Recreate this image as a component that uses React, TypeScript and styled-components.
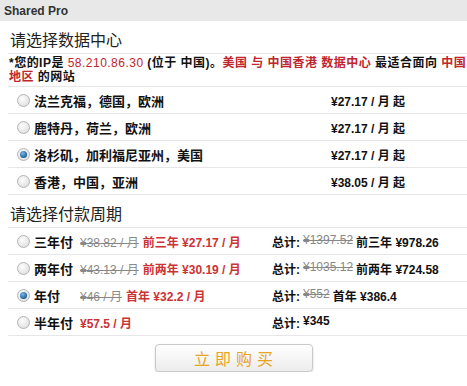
import React, { useState } from "react";
import styled, { createGlobalStyle } from "styled-components";

/** ===========================================================================
 * Shared Pro order form
 * ----------------------------------------------------------------------------
 * Datacenter picker plus billing period picker, with a buy button.
 * ============================================================================
 */

type Datacenter = { id: string; name: string; price: string };
type Period = {
  id: string;
  label: string;
  oldMonthly?: string;
  promo: string;
  oldTotal?: string;
  total: string;
};

const DATACENTERS: Datacenter[] = [
  { id: "fra", name: "法兰克福，德国，欧洲", price: "¥27.17 / 月 起" },
  { id: "rtm", name: "鹿特丹，荷兰，欧洲", price: "¥27.17 / 月 起" },
  { id: "lax", name: "洛杉矶，加利福尼亚州，美国", price: "¥27.17 / 月 起" },
  { id: "hkg", name: "香港，中国，亚洲", price: "¥38.05 / 月 起" },
];

const PERIODS: Period[] = [
  {
    id: "3y",
    label: "三年付",
    oldMonthly: "¥38.82 / 月",
    promo: "前三年 ¥27.17 / 月",
    oldTotal: "¥1397.52",
    total: "前三年 ¥978.26",
  },
  {
    id: "2y",
    label: "两年付",
    oldMonthly: "¥43.13 / 月",
    promo: "前两年 ¥30.19 / 月",
    oldTotal: "¥1035.12",
    total: "前两年 ¥724.58",
  },
  {
    id: "1y",
    label: "年付",
    oldMonthly: "¥46 / 月",
    promo: "首年 ¥32.2 / 月",
    oldTotal: "¥552",
    total: "首年 ¥386.4",
  },
  { id: "6m", label: "半年付", promo: "¥57.5 / 月", total: "¥345" },
];

const App: React.FC = () => {
  const [dc, setDc] = useState("lax");
  const [period, setPeriod] = useState("1y");

  return (
    <>
      <GlobalStyle />
      <Header>Shared Pro</Header>
      <Body>
        <SectionTitle>请选择数据中心</SectionTitle>
        <Notice>
          *您的IP是 <Ip>58.210.86.30</Ip> (位于 中国)。
          <Red>美国 与 中国香港 数据中心</Red> 最适合面向 <Red>中国地区</Red>{" "}
          的网站
        </Notice>
        {DATACENTERS.map((d) => (
          <DcRow key={d.id} onClick={() => setDc(d.id)}>
            <Radio $checked={dc === d.id} />
            <DcName>{d.name}</DcName>
            <DcPrice>{d.price}</DcPrice>
          </DcRow>
        ))}
        <SectionTitle>请选择付款周期</SectionTitle>
        {PERIODS.map((p) => (
          <PeriodRow key={p.id} onClick={() => setPeriod(p.id)}>
            <PeriodLabel>
              <Radio $checked={period === p.id} />
              <span>{p.label}</span>
            </PeriodLabel>
            <Monthly>
              {p.oldMonthly && <Strike>{p.oldMonthly}</Strike>}
              <Promo>{p.promo}</Promo>
            </Monthly>
            <Total>
              总计:
              {p.oldTotal && <Strike>{p.oldTotal}</Strike>}
              <span>{p.total}</span>
            </Total>
          </PeriodRow>
        ))}
        <ButtonBar>
          <BuyButton>立即购买</BuyButton>
        </ButtonBar>
      </Body>
    </>
  );
};

/** ===========================================================================
 * Styled Components
 * ============================================================================
 */

const RED = "#c0262c";
const LINE = "#e6e6e6";

const GlobalStyle = createGlobalStyle`
  html, body {
    margin: 0;
    padding: 0;
    background: #fff;
  }
  body {
    font-family: "Liberation Sans", Arial, "Noto Sans CJK SC", sans-serif;
    color: #111;
  }
`;

const Header = styled.div`
  height: 21px;
  background: #e8e8e8;
  padding-left: 4px;
  font-size: 12px;
  font-weight: bold;
  line-height: 22px;
  color: #333;
`;

const Body = styled.div`
  margin-left: 8px;
`;

const SectionTitle = styled.div`
  height: 32px;
  padding-left: 2px;
  font-size: 16px;
  line-height: 36px;
  color: #222;
  border-bottom: 1px solid ${LINE};
  font-family: "Noto Sans CJK SC", sans-serif;
`;

const Notice = styled.div`
  height: 33px;
  padding: 2px 0 0 1px;
  box-sizing: border-box;
  font-size: 12px;
  font-weight: bold;
  line-height: 14px;
  letter-spacing: 0.48px;
  border-bottom: 1px solid ${LINE};
`;

const Red = styled.span`
  color: ${RED};
`;

const Ip = styled.span`
  color: ${RED};
  font-weight: normal;
`;

const Radio = styled.span<{ $checked?: boolean }>`
  flex: none;
  width: 11px;
  height: 11px;
  border-radius: 50%;
  border: 1px solid #b4b4b4;
  background: radial-gradient(circle at 40% 35%, #fdfdfd, #d8d8d8);
  position: relative;

  &::after {
    content: "";
    display: ${(p) => (p.$checked ? "block" : "none")};
    position: absolute;
    left: 2px;
    top: 2px;
    width: 7px;
    height: 7px;
    border-radius: 50%;
    background: radial-gradient(circle at 40% 35%, #7fb8e8, #1d5d99 70%);
  }
`;

const DcRow = styled.div`
  height: 26px;
  display: flex;
  align-items: center;
  padding-left: 9px;
  border-bottom: 1px solid ${LINE};
  cursor: pointer;
`;

const DcName = styled.span`
  flex: 1;
  margin-left: 4px;
  font-size: 13px;
  font-weight: bold;
  font-family: "Noto Sans CJK SC", sans-serif;
`;

const DcPrice = styled.span`
  width: 136px;
  font-size: 12px;
  font-weight: bold;
`;

const PeriodRow = styled.div`
  height: 26px;
  display: flex;
  align-items: center;
  padding-left: 9px;
  border-bottom: 1px solid ${LINE};
  font-size: 12px;
  cursor: pointer;
`;

const PeriodLabel = styled.span`
  width: 63px;
  display: flex;
  align-items: center;
  gap: 4px;
  font-size: 13px;
  font-weight: bold;
  font-family: "Noto Sans CJK SC", sans-serif;
`;

const Monthly = styled.span`
  width: 192px;
  display: flex;
  gap: 4px;
`;

const Strike = styled.span`
  color: #888;
  font-weight: normal;
  text-decoration: line-through;
`;

const Promo = styled.span`
  color: #cc3333;
  font-weight: bold;
`;

const Total = styled.span`
  display: flex;
  gap: 3px;
  font-weight: bold;
`;

const ButtonBar = styled.div`
  display: flex;
  justify-content: center;
  padding: 8px 0 0 0;
  margin-left: -8px;
`;

const BuyButton = styled.button`
  width: 158px;
  height: 28px;
  border: 1px solid #c9c9c9;
  border-radius: 4px;
  background: linear-gradient(#ffffff, #ececec);
  box-shadow: 0 1px 2px rgba(0, 0, 0, 0.2);
  color: #e8a41c;
  font-size: 16px;
  letter-spacing: 5px;
  text-indent: 5px;
  font-family: "Noto Sans CJK SC", sans-serif;
  cursor: pointer;
  padding: 0;
`;

/** ===========================================================================
 * Export
 * ============================================================================
 */

export default App;
